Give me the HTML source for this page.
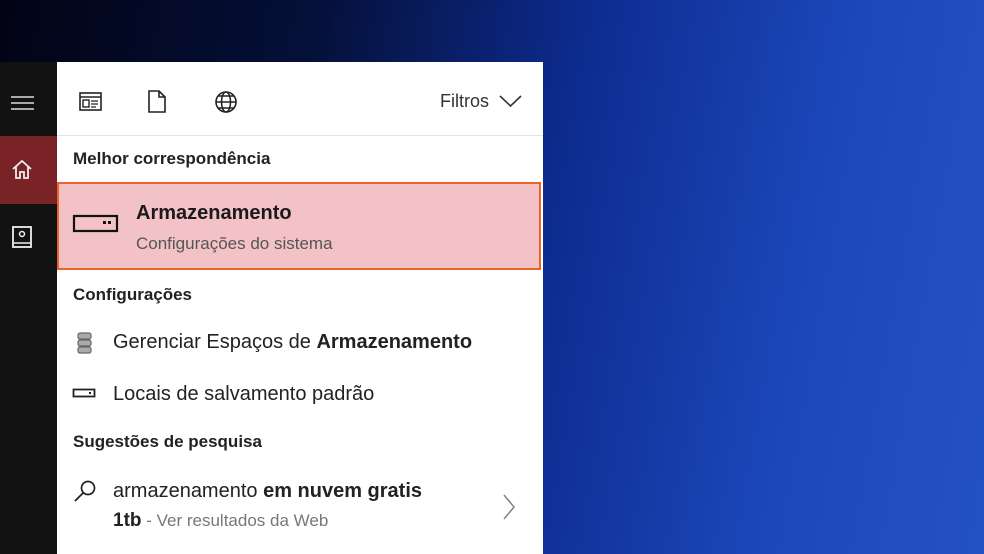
<!DOCTYPE html>
<html><head><meta charset="utf-8"><style>
html,body{margin:0;width:984px;height:554px;overflow:hidden}
body{position:relative;font-family:"Liberation Sans",sans-serif;
background:linear-gradient(100deg,#020414 0%,#05103a 30%,#0d2c90 55%,#1b46b8 78%,#2352c4 100%);}
.side{position:absolute;left:0;top:62px;width:57px;height:492px;background:#121212;}
.home{position:absolute;left:0;top:136px;width:57px;height:68px;background:#7a2327;}
.panel{position:absolute;left:57px;top:62px;width:486px;height:492px;background:#fff;overflow:hidden}
.t{position:absolute;color:#1a1a1a;white-space:nowrap}
.h{font-size:17px;font-weight:bold;color:#222}
.best{position:absolute;left:0;top:120px;width:480px;height:84px;background:#f2c2c6;border:2px solid #e8642a;}
</style></head><body>
<div class="side"></div>
<div class="home"></div>
<svg style="position:absolute;left:10px;top:95px" width="26" height="16"><path d="M1 2H24M1 8H24M1 14H24" stroke="#ddd" stroke-width="1.6"/></svg>
<svg style="position:absolute;left:10px;top:158px" width="26" height="24"><path d="M3 11L12 3L21 11M6 9V20H10V14H14V20H18V9" fill="none" stroke="#eee" stroke-width="1.8"/></svg>
<svg style="position:absolute;left:11px;top:225px" width="24" height="26"><rect x="2" y="2" width="18" height="20" fill="none" stroke="#eee" stroke-width="1.8"/><circle cx="11" cy="9" r="2.5" fill="none" stroke="#eee" stroke-width="1.5"/><path d="M2 18H20" stroke="#eee" stroke-width="1.5"/></svg>
<div class="panel">
<svg style="position:absolute;left:22px;top:30px" width="24" height="20"><rect x="1" y="1" width="21" height="17" fill="none" stroke="#222" stroke-width="1.6"/><path d="M1 5H22" stroke="#222" stroke-width="1.6"/><rect x="4" y="8" width="6" height="7" fill="none" stroke="#222" stroke-width="1.4"/><path d="M12 9H19M12 12H19M12 15H17" stroke="#222" stroke-width="1.3"/></svg>
<svg style="position:absolute;left:90px;top:28px" width="20" height="24"><path d="M2 1H12L18 7V22H2Z M12 1V7H18" fill="none" stroke="#222" stroke-width="1.6"/></svg>
<svg style="position:absolute;left:157px;top:28px" width="24" height="24"><circle cx="12" cy="12" r="10" fill="none" stroke="#222" stroke-width="1.6"/><ellipse cx="12" cy="12" rx="4.5" ry="10" fill="none" stroke="#222" stroke-width="1.5"/><path d="M2 12H22M4 6H20M4 18H20" stroke="#222" stroke-width="1.4"/></svg>
<div class="t" style="left:383px;top:29px;font-size:18px;color:#333">Filtros</div>
<svg style="position:absolute;left:442px;top:33px" width="24" height="14"><path d="M1 1L11.5 11L22 1" fill="none" stroke="#333" stroke-width="1.6"/></svg>
<div style="position:absolute;left:0;top:73px;width:486px;height:1px;background:#e4e4e4"></div>
<div class="t h" style="left:16px;top:87px">Melhor correspondência</div>
<div class="best"></div>
<svg style="position:absolute;left:15px;top:152px" width="48" height="22"><rect x="2" y="2" width="43" height="15" fill="none" stroke="#111" stroke-width="2.2"/><rect x="31" y="7" width="3" height="3" fill="#111"/><rect x="36" y="7" width="3" height="3" fill="#111"/></svg>
<div class="t" style="left:79px;top:140px;font-size:20px;font-weight:bold;color:#1a1a1a">Armazenamento</div>
<div class="t" style="left:79px;top:172px;font-size:17px;color:#555">Configurações do sistema</div>
<div class="t h" style="left:16px;top:223px">Configurações</div>
<svg style="position:absolute;left:20px;top:270px" width="16" height="24"><g fill="#aaa" stroke="#666" stroke-width="1.2"><rect x="1" y="1" width="13" height="6" rx="2"/><rect x="1" y="8" width="13" height="6" rx="2"/><rect x="1" y="15" width="13" height="6" rx="2"/></g></svg>
<div class="t" style="left:56px;top:269px;font-size:20px;color:#222">Gerenciar Espaços de <b>Armazenamento</b></div>
<svg style="position:absolute;left:15px;top:326px" width="26" height="12"><rect x="1.5" y="1.5" width="21" height="7" fill="none" stroke="#222" stroke-width="1.8"/><rect x="17" y="4" width="2" height="2" fill="#222"/></svg>
<div class="t" style="left:56px;top:321px;font-size:20px;color:#222">Locais de salvamento padrão</div>
<div class="t h" style="left:16px;top:370px">Sugestões de pesquisa</div>
<svg style="position:absolute;left:16px;top:417px" width="26" height="26" viewBox="0 0 26 26"><circle cx="15" cy="9" r="6.5" fill="none" stroke="#222" stroke-width="1.7"/><path d="M10 14L2 22" stroke="#222" stroke-width="1.8"/></svg>
<div class="t" style="left:56px;top:418px;font-size:20px;color:#222">armazenamento <b>em nuvem gratis</b></div>
<div class="t" style="left:56px;top:448px;font-size:17px;color:#777"><b style="color:#222;font-size:19px">1tb</b> - Ver resultados da Web</div>
<svg style="position:absolute;left:445px;top:432px" width="14" height="26"><path d="M2 1L12 13L2 25" fill="none" stroke="#888" stroke-width="1.6"/></svg>
</div>
</body></html>
